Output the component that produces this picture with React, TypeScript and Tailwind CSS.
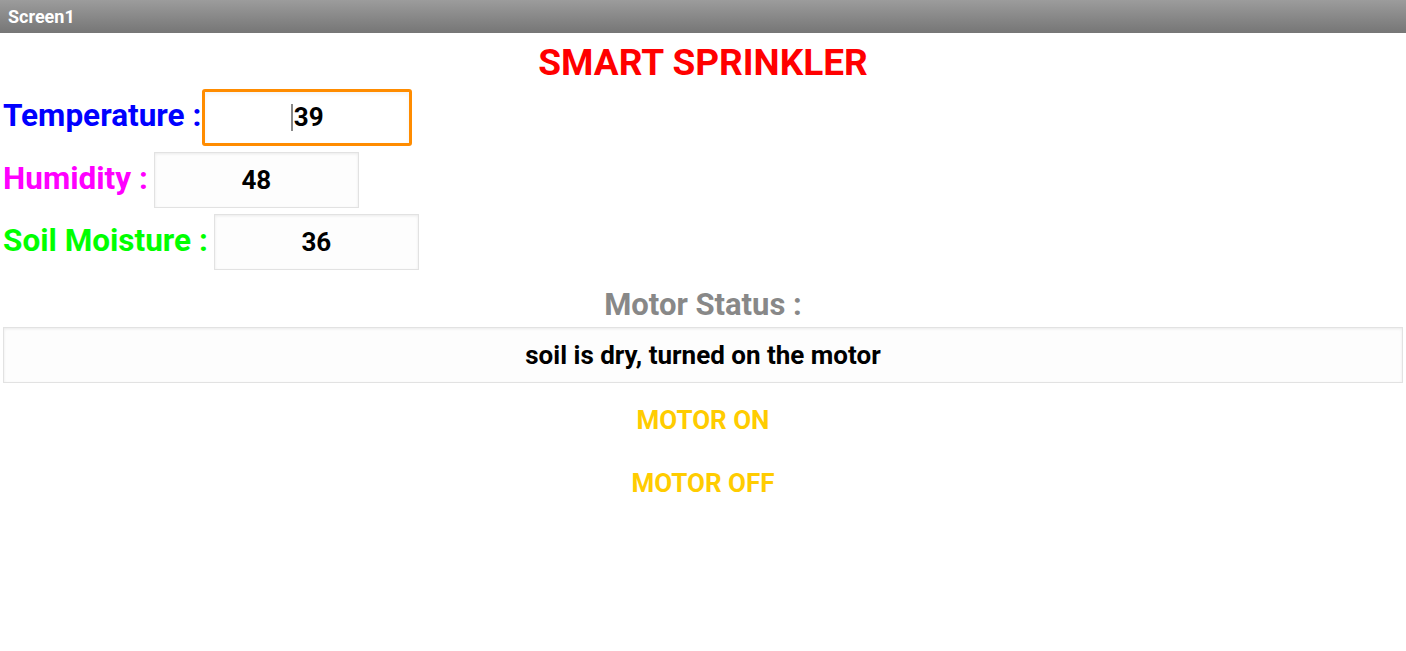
const readings = [
  { label: 'Temperature :', value: '39', color: 'text-[#0000ff]', focused: true },
  { label: 'Humidity :', value: '48', color: 'text-[#ff00ff]', focused: false },
  { label: 'Soil Moisture :', value: '36', color: 'text-[#00ff00]', focused: false },
];

const ValueBox = ({ value, focused }: { value: string; focused: boolean }) => (
  <div
    className={
      focused
        ? 'flex h-[57px] w-[210px] items-center justify-center rounded-[3px] border-[3px] border-[#ff8c00] bg-white shadow-inner'
        : 'flex h-[56px] w-[205px] items-center justify-center border border-[#e2e2e2] bg-[#fdfdfd] shadow-[inset_0_1px_3px_rgba(0,0,0,0.08)]'
    }
  >
    {focused && <span className="mr-[1px] h-[27px] w-[2px] bg-[#888]" />}
    <span className="text-[26px] font-bold text-black">{value}</span>
  </div>
);

export default function App() {
  return (
    <div className="min-h-screen bg-white" style={{ fontFamily: 'Roboto, "Liberation Sans", sans-serif' }}>
      <div className="flex h-[33px] items-center bg-gradient-to-b from-[#9c9c9c] to-[#767676] pl-2">
        <span className="text-[18px] font-bold text-white">Screen1</span>
      </div>
      <h1 className="flex h-[56px] items-center justify-center pt-[3px] text-[37px] font-bold text-[#ff0000]">
        SMART SPRINKLER
      </h1>
      <div className="flex flex-col gap-[6px] px-[3px]">
        {readings.map((r) => (
          <div key={r.label} className={r.focused ? 'flex items-center gap-[1px]' : 'flex items-center gap-[6px]'}>
            <span className={`pb-[3px] text-[31.5px] font-bold ${r.color}`}>{r.label}</span>
            <ValueBox value={r.value} focused={r.focused} />
          </div>
        ))}
      </div>
      <p className="mt-[12px] h-[45px] text-center text-[31px] leading-[45px] font-bold text-[#888888]">Motor Status :</p>
      <div className="mx-[3px] flex h-[56px] items-center justify-center border border-[#e2e2e2] bg-[#fdfdfd] shadow-[inset_0_1px_3px_rgba(0,0,0,0.08)]">
        <span className="text-[26px] font-bold text-black">soil is dry, turned on the motor</span>
      </div>
      <div className="flex flex-col items-center pt-[6px]">
        <button type="button" className="h-[63px] text-[26px] font-bold text-[#ffcc00]">
          MOTOR ON
        </button>
        <button type="button" className="h-[63px] text-[26px] font-bold text-[#ffcc00]">
          MOTOR OFF
        </button>
      </div>
    </div>
  );
}
